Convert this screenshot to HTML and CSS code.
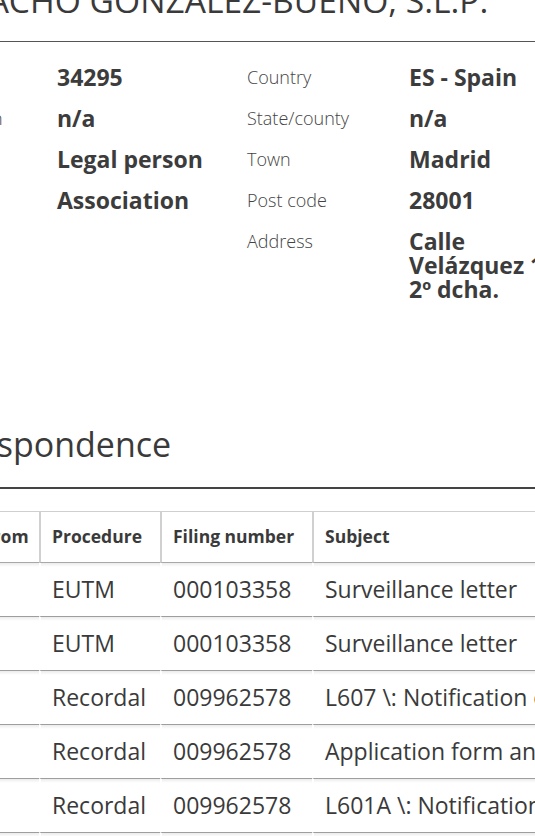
FILE: index.html
```html
<!DOCTYPE html>
<html lang="en">
<head>
<meta charset="utf-8">
<title>Representative details</title>
<link rel="stylesheet" href="styles.css">
</head>
<body>
<div class="page">
  <h1 class="title">DESPACHO GONZALEZ-BUENO, S.L.P.</h1>

  <dl class="info">
    <dt class="label">ID</dt>
    <dd class="value">34295</dd>
    <dt class="label">Country</dt>
    <dd class="value">ES - Spain</dd>

    <dt class="label">Organisation</dt>
    <dd class="value">n/a</dd>
    <dt class="label">State/county</dt>
    <dd class="value">n/a</dd>

    <dt class="label">Legal</dt>
    <dd class="value">Legal person</dd>
    <dt class="label">Town</dt>
    <dd class="value">Madrid</dd>

    <dt class="label">Type</dt>
    <dd class="value">Association</dd>
    <dt class="label">Post code</dt>
    <dd class="value">28001</dd>

    <dt class="label"></dt>
    <dd class="value"></dd>
    <dt class="label">Address</dt>
    <dd class="value address">Calle Velázquez 10, 2º dcha.</dd>
  </dl>

  <h2 class="section-title">Correspondence</h2>

  <table class="corr">
    <colgroup>
      <col class="c-date">
      <col class="c-from">
      <col class="c-proc">
      <col class="c-num">
      <col class="c-subj">
    </colgroup>
    <thead>
      <tr>
        <th>Date</th>
        <th>From</th>
        <th>Procedure</th>
        <th>Filing number</th>
        <th>Subject</th>
      </tr>
    </thead>
    <tbody>
      <tr><td>01/02/2011</td><td></td><td>EUTM</td><td>000103358</td><td>Surveillance letter</td></tr>
      <tr><td>01/02/2011</td><td></td><td>EUTM</td><td>000103358</td><td>Surveillance letter</td></tr>
      <tr><td>12/05/2011</td><td></td><td>Recordal</td><td>009962578</td><td>L607 \: Notification of registration</td></tr>
      <tr><td>12/05/2011</td><td></td><td>Recordal</td><td>009962578</td><td>Application form and annexes</td></tr>
      <tr><td>12/05/2011</td><td></td><td>Recordal</td><td>009962578</td><td>L601A \: Notification of receipt</td></tr>
      <tr><td>12/05/2011</td><td></td><td>Recordal</td><td>009962578</td><td>Surveillance letter</td></tr>
    </tbody>
  </table>
</div>
</body>
</html>
```

FILE: styles.css
```css
html, body {
  margin: 0;
  padding: 0;
  background: #fff;
  overflow: hidden;
}

body {
  font-family: "Open Sans", "DejaVu Sans", sans-serif;
  color: #3a3a3a;
}

.page {
  margin-left: -92px;
  width: 1100px;
}

.title {
  margin: -20px 0 0 -2px;
  padding: 0 0 21px 0;
  font-size: 33.6px;
  line-height: 40px;
  font-weight: 400;
  color: #3a3a3a;
  white-space: nowrap;
  border-bottom: 1px solid #555;
}

.info {
  display: grid;
  grid-template-columns: 158px 190px 162px 160px;
  row-gap: 17px;
  margin: 23px 0 0 -9px;
}

.info dt,
.info dd {
  margin: 0;
  line-height: 24px;
}

.label {
  font-size: 18px;
  font-weight: 300;
  color: #444;
  line-height: 24px;
}

.value {
  font-size: 23px;
  font-weight: 700;
  color: #3c3c3c;
}

.section-title {
  margin: 123px 0 0 0;
  padding: 0 0 23px 0;
  font-size: 34px;
  line-height: 40px;
  font-weight: 400;
  color: #3a3a3a;
  border-bottom: 2px solid #444;
}

.corr {
  margin: 22px 0 0 -98px;
  width: 1100px;
  table-layout: fixed;
  border-collapse: separate;
  border-spacing: 0;
  border-top: 1px solid #cfcfcf;
}

.c-date { width: 160px; }
.c-from { width: 69px; }
.c-proc { width: 121px; }
.c-num { width: 152px; }

.corr th,
.corr td {
  text-align: left;
  white-space: nowrap;
  overflow: hidden;
  padding: 0 11px 0 11px;
  border-left: 2px solid transparent;
  line-height: 24px;
}

.corr th {
  padding-top: 12px;
  padding-bottom: 14px;
  font-size: 17.5px;
  font-weight: 700;
  color: #3a3a3a;
  border-left-color: #d0d0d0;
  border-bottom: 1px solid #a8a8a8;
}

.corr td {
  padding-top: 14px;
  padding-bottom: 15px;
  font-size: 23px;
  font-weight: 400;
  color: #3a3a3a;
  border-bottom: 1px solid #9e9e9e;
  box-shadow: inset 0 4px 3px -2px #ececec;
}
```
